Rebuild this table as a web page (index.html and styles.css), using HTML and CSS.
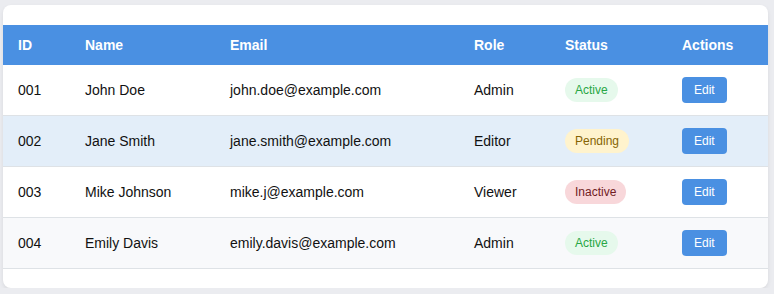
FILE: index.html
```html
<!DOCTYPE html>
<html lang="en">
<head>
	<meta charset="UTF-8">
	<title>Users</title>
	<link rel="stylesheet" href="styles.css">
</head>
<body>
	<div class="card">
		<table class="users">
			<thead>
				<tr>
					<th>ID</th>
					<th>Name</th>
					<th>Email</th>
					<th>Role</th>
					<th>Status</th>
					<th>Actions</th>
				</tr>
			</thead>
			<tbody>
				<tr>
					<td>001</td>
					<td>John Doe</td>
					<td>john.doe@example.com</td>
					<td>Admin</td>
					<td><span class="badge active">Active</span></td>
					<td><button class="btn">Edit</button></td>
				</tr>
				<tr class="hover">
					<td>002</td>
					<td>Jane Smith</td>
					<td>jane.smith@example.com</td>
					<td>Editor</td>
					<td><span class="badge pending">Pending</span></td>
					<td><button class="btn">Edit</button></td>
				</tr>
				<tr>
					<td>003</td>
					<td>Mike Johnson</td>
					<td>mike.j@example.com</td>
					<td>Viewer</td>
					<td><span class="badge inactive">Inactive</span></td>
					<td><button class="btn">Edit</button></td>
				</tr>
				<tr class="stripe">
					<td>004</td>
					<td>Emily Davis</td>
					<td>emily.davis@example.com</td>
					<td>Admin</td>
					<td><span class="badge active">Active</span></td>
					<td><button class="btn">Edit</button></td>
				</tr>
			</tbody>
		</table>
	</div>
</body>
</html>
```

FILE: styles.css
```css
*{
	margin: 0;
	padding: 0;
	box-sizing: border-box;
}
body{
	background: #ebecf0;
	font-family: "Liberation Sans", Arial, sans-serif;
	font-size: 14px;
	color: #111;
	padding: 5px 6px 0 3px;
}
.card{
	background: #fff;
	border-radius: 8px;
	padding: 20px 0 19px;
	box-shadow: 0 2px 4px rgba(0,0,0,0.08);
}
.users{
	width: 100%;
	border-collapse: separate;
	border-spacing: 0;
}
.users th{
	background: #4a90e2;
	color: #fff;
	font-weight: bold;
	text-align: left;
	height: 40px;
	padding: 0 15px;
}
.users td{
	height: 51px;
	padding: 0 15px;
	border-bottom: 1px solid #dee2e6;
	white-space: nowrap;
}
.users th:nth-child(1), .users td:nth-child(1){ width: 67px; }
.users th:nth-child(2), .users td:nth-child(2){ width: 145px; }
.users th:nth-child(3), .users td:nth-child(3){ width: 244px; }
.users th:nth-child(4), .users td:nth-child(4){ width: 91px; }
.users th:nth-child(5), .users td:nth-child(5){ width: 117px; }
.users tr.hover td{
	background: #e3eef9;
}
.users tr.stripe td{
	background: #f8f9fb;
}
.badge{
	display: inline-block;
	font-size: 12px;
	line-height: 14px;
	padding: 5px 10px;
	border-radius: 12px;
}
.badge.active{
	background: #e6f9ec;
	color: #28a745;
}
.badge.pending{
	background: #fff3cd;
	color: #856404;
}
.badge.inactive{
	background: #f8d7da;
	color: #721c24;
}
.btn{
	background: #4a90e2;
	color: #fff;
	border: none;
	border-radius: 4px;
	font-family: "Liberation Sans", Arial, sans-serif;
	font-size: 12px;
	line-height: 14px;
	padding: 6px 12px;
	cursor: pointer;
}
```
